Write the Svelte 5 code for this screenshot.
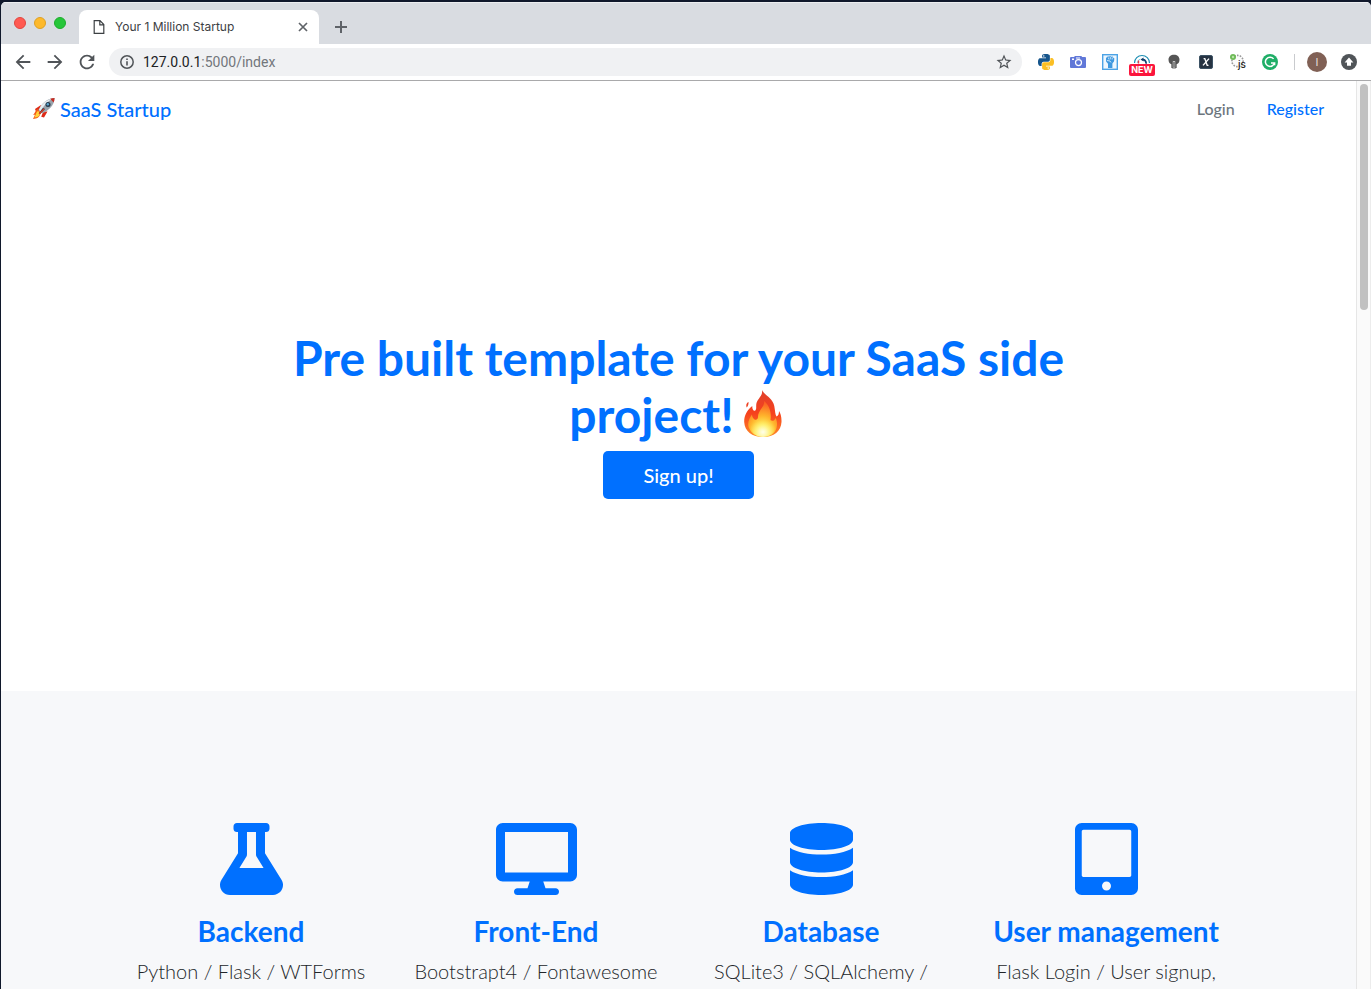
<script>
  const features = [
    {
      title: 'Backend',
      text: 'Python / Flask / WTForms',
      width: 448,
      path: 'M437.2 403.5L320 215V64h8c13.3 0 24-10.7 24-24V24c0-13.3-10.7-24-24-24H120c-13.3 0-24 10.7-24 24v16c0 13.3 10.7 24 24 24h8v151L10.8 403.5C-18.5 450.6 15.3 512 70.9 512h306.2c55.7 0 89.4-61.5 60.1-108.5zM137.9 320l48.2-77.6c3.7-5.2 5.8-11.6 5.8-18.4V64h64v160c0 6.9 2.2 13.2 5.8 18.4l48.2 77.6h-172z'
    },
    {
      title: 'Front-End',
      text: 'Bootstrapt4 / Fontawesome',
      width: 576,
      path: 'M528 0H48C21.5 0 0 21.5 0 48v320c0 26.5 21.5 48 48 48h192l-16 48h-72c-13.3 0-24 10.7-24 24s10.7 24 24 24h272c13.3 0 24-10.7 24-24s-10.7-24-24-24h-72l-16-48h192c26.5 0 48-21.5 48-48V48c0-26.5-21.5-48-48-48zm-16 352H64V64h448v288z'
    },
    {
      title: 'Database',
      text: 'SQLite3 / SQLAlchemy /',
      width: 448,
      path: 'M448 73.143v45.714C448 159.143 347.667 192 224 192S0 159.143 0 118.857V73.143C0 32.857 100.333 0 224 0s224 32.857 224 73.143zM448 176v102.857C448 319.143 347.667 352 224 352S0 319.143 0 278.857V176c48.125 33.143 136.208 48.572 224 48.572S399.874 209.143 448 176zm0 160v102.857C448 479.143 347.667 512 224 512S0 479.143 0 438.857V336c48.125 33.143 136.208 48.572 224 48.572S399.874 369.143 448 336z'
    },
    {
      title: 'User management',
      text: 'Flask Login / User signup,',
      width: 448,
      path: 'M400 0H48C21.5 0 0 21.5 0 48v416c0 26.5 21.5 48 48 48h352c26.5 0 48-21.5 48-48V48c0-26.5-21.5-48-48-48zM224 480c-17.7 0-32-14.3-32-32s14.3-32 32-32 32 14.3 32 32-14.3 32-32 32zm176-108c0 6.6-5.4 12-12 12H60c-6.6 0-12-5.4-12-12V60c0-6.6 5.4-12 12-12h328c6.6 0 12 5.4 12 12v312z'
    }
  ];

  const snake =
    'M14.25.18l.9.2.73.26.59.3.45.32.34.34.25.34.16.33.1.3.04.26.02.2-.01.13V8.5l-.05.63-.13.55-.21.46-.26.38-.3.31-.33.25-.35.19-.35.14-.33.1-.3.07-.26.04-.21.02H8.77l-.69.05-.59.14-.5.22-.41.27-.33.32-.27.35-.2.36-.15.37-.1.35-.07.32-.04.27-.02.21v3.06H3.17l-.21-.03-.28-.07-.32-.12-.35-.18-.36-.26-.36-.36-.35-.46-.32-.59-.28-.73-.21-.88-.14-1.05-.05-1.23.06-1.22.16-1.04.24-.87.32-.71.36-.57.4-.44.42-.33.42-.24.4-.16.36-.1.32-.05.24-.01h.16l.06.01h8.16v-.83H6.18l-.01-2.75-.02-.37.05-.34.11-.31.17-.28.25-.26.31-.23.38-.2.44-.18.51-.15.58-.12.64-.1.71-.06.77-.04.84-.02 1.27.05zm-6.3 1.98l-.23.33-.08.41.08.41.23.34.33.22.41.09.41-.09.33-.22.23-.34.08-.41-.08-.41-.23-.33-.33-.22-.41-.09-.41.09z';
</script>

<div class="desktop">
  <div class="window">
    <div class="tabs">
      <div class="lights">
        <button class="light red" aria-label="Close window"></button>
        <button class="light amber" aria-label="Minimise window"></button>
        <button class="light green" aria-label="Zoom window"></button>
      </div>
      <div class="tab">
        <svg width="12" height="16" viewBox="0 0 12 16" fill="none" stroke="#3c4043" stroke-width="1.2"><path d="M1.2 1.7h5.8l3.8 3.8v8.8H1.2zM6.8 1.8v4h4" /></svg>
        <span class="tab-title">Your 1 Million Startup</span>
        <button class="bare tab-close" aria-label="Close tab">
          <svg width="10" height="10" viewBox="0 0 10 10" stroke="#5f6368" stroke-width="1.7"><path d="M1 1l8 8M9 1l-8 8" /></svg>
        </button>
      </div>
      <button class="bare new-tab" aria-label="New tab">
        <svg width="12" height="12" viewBox="0 0 12 12" stroke="#5f6368" stroke-width="2"><path d="M6 0v12M0 6h12" /></svg>
      </button>
    </div>

    <div class="toolbar">
      <button class="bare tool" aria-label="Back"><svg width="22" height="22" viewBox="0 0 24 24" fill="#505458"><path d="M20 10.900H7.830l5.590-5.490L12 4l-8 8 8 8 1.410-1.410L7.830 13.100H20z" /></svg></button>
      <button class="bare tool" aria-label="Forward"><svg width="22" height="22" viewBox="0 0 24 24" fill="#505458"><path d="M4 10.900h12.170l-5.590-5.490L12 4l8 8-8 8-1.410-1.410 5.580-5.490H4z" /></svg></button>
      <button class="bare tool" aria-label="Reload"><svg width="22" height="22" viewBox="0 0 24 24" fill="#505458"><path d="M17.650 6.350C16.200 4.900 14.210 4 12 4c-4.420 0-7.990 3.580-7.990 8s3.570 8 7.990 8c3.730 0 6.840-2.550 7.730-6h-2.080c-.82 2.330-3.040 4-5.650 4-3.310 0-6-2.690-6-6s2.690-6 6-6c1.660 0 3.140.69 4.220 1.780L13 11h7V4l-2.350 2.350z" /></svg></button>
      <div class="address">
        <svg width="16" height="16" viewBox="0 0 16 16"><circle cx="8" cy="8" r="6.200" fill="none" stroke="#505458" stroke-width="1.500" /><path d="M7.200 4.400h1.600V6H7.200zM7.200 7.200h1.600v4.400H7.200z" fill="#505458" /></svg>
        <span class="url">127.0.0.1<span class="url-path">:5000/index</span></span>
        <button class="bare" aria-label="Bookmark this page"><svg width="18" height="18" viewBox="0 0 24 24" fill="#505458"><path d="M22 9.240l-7.190-.62L12 2 9.190 8.630 2 9.240l5.460 4.730L5.820 21 12 17.270 18.180 21l-1.630-7.030L22 9.240zM12 15.400l-3.760 2.270 1-4.280-3.320-2.880 4.380-.38L12 6.100l1.710 4.040 4.380.38-3.320 2.880 1 4.280L12 15.400z" /></svg></button>
      </div>

      <div class="extensions">
        <button class="bare tool" aria-label="Python">
          <svg width="16" height="16" viewBox="0 0 24 24"><path fill="#16558c" d={snake} /><path fill="#fbbf24" transform="rotate(180 12 12)" d={snake} /></svg>
        </button>
        <button class="bare tool" aria-label="Screenshot">
          <svg width="16" height="16" viewBox="0 0 16 16"><path fill="#6178d8" d="M0 4q0-1 1-1h3l1-1h6q1 0 1 1h3q1 0 1 1v9q0 1-1 1H1q-1 0-1-1z" /><circle cx="8.500" cy="8.600" r="3" fill="none" stroke="#fff" stroke-width="1.200" /><path fill="#fff" d="M2 4.500h2V6H2zM6 3.500h4v1H6z" /></svg>
        </button>
        <button class="bare tool" aria-label="Fist">
          <svg width="16" height="16" viewBox="0 0 16 16"><rect x=".7" y=".7" width="14.600" height="14.600" fill="#eef7fe" stroke="#4ca3e6" stroke-width="1.400" /><path fill="#3f98df" d="M4 4l2-1.700 1 .5 1-.8 1.300.7 1.400-.2.8 1.400.8.3-.2 3-1.700 2.200V14H6V9.800L4.100 7.500z" /><path stroke="#e5f4ff" stroke-width=".8" d="M6.300 3.500l.7 2M8.300 3v2.400M10.300 3.500l-.2 2M5 6.500l3 .5 1 1.500" fill="none" /></svg>
        </button>
        <button class="bare tool badge-host" aria-label="Speed, new">
          <svg width="18" height="18" viewBox="0 0 18 18" fill="none"><path d="M1.500 10a7.500 7.500 0 0 1 15 0" stroke="#1f8fb4" stroke-width="1.200" /><path d="M4.200 10a5 5 0 0 1 3-4" stroke="#7ccde0" stroke-width="1" /><path d="M7.500 6.500l3-2v1.200q3.500.8 3.500 5h-1.500q-.5-3-2-3.200v1z" fill="#123f6c" /><path d="M5.500 7.500v3" stroke="#e6384b" stroke-width="1.400" /></svg>
          <span class="badge">NEW</span>
        </button>
        <button class="bare tool" aria-label="Lights">
          <svg width="14" height="16" viewBox="0 0 14 16"><path fill="#555" d="M7 .8c3.200 0 5.500 2 5.500 4.900 0 2.600-1.500 4.300-3 4.600V14h-5v-3.700c-1.500-.3-3-2-3-4.600C1.500 2.800 3.800.8 7 .8z" /><path d="M5.200 14V7.500Q7 4.800 8.800 7.500V14z" fill="#c9c9c9" stroke="#444" stroke-width=".8" /><path stroke="#444" d="M7 8v5" /></svg>
        </button>
        <button class="bare tool" aria-label="XPath">
          <svg width="14" height="14" viewBox="0 0 14 14"><rect x=".5" y=".5" width="13" height="13" rx="1.500" fill="#263342" stroke="#3d5365" /><path d="M4.600 3.600h1.200l2.400 6.800h1.300M10 3.600L4 10.400" fill="none" stroke="#fff" stroke-width="1.400" /></svg>
        </button>
        <button class="bare tool" aria-label="JavaScript switch">
          <svg width="18" height="18" viewBox="0 0 18 18"><circle cx="8.500" cy="8" r="5.600" fill="#fbfbfb" stroke="#9a9a9a" stroke-width="1.600" stroke-dasharray="1.600 1.200" /><circle cx="4" cy="4" r="3" fill="#6dba57" /><circle cx="4" cy="4" r="1.200" fill="#b9e2a9" /><text x="9" y="15" font-family="Inter, sans-serif" font-size="10" font-weight="500" fill="#252525">js</text></svg>
        </button>
        <button class="bare tool" aria-label="Grammar">
          <svg width="16" height="16" viewBox="0 0 16 16"><circle cx="8" cy="8" r="8" fill="#1fae67" /><path d="M11.600 4.900a4.600 4.600 0 1 0 .9 4H9M12.600 8.300v3" fill="none" stroke="#fff" stroke-width="1.500" /></svg>
        </button>
      </div>
      <span class="divider"></span>
      <button class="bare tool" aria-label="Profile"><span class="avatar">I</span></button>
      <button class="bare tool" aria-label="Update"><svg width="16" height="16" viewBox="0 0 16 16"><circle cx="8" cy="8" r="8" fill="#505458" /><path d="M8 3.500L12.400 8.400H10V11.800H6V8.400H3.600z" fill="#fff" /></svg></button>
    </div>

    <div class="viewport">
      <div class="page">
        <nav class="navbar">
          <a class="brand" href="#home">
            <svg width="24" height="24" viewBox="0 0 24 24">
              <path d="M9 8L3 12l1 2.500 4-1.500zM15.500 14.500l-3.500 6-2.800-.8 2-5z" fill="#df2b16" />
              <path d="M6 12c-3 1-2.500 4-5 6l2-.2L1 22c4-.3 6-1.300 8-6z" fill="#f45b16" />
              <path d="M6 14c-2 1-2 4-3.700 6.500C6 20.500 7.500 19 8.500 16z" fill="#ffd33b" />
              <path d="M22.500 1C16 1 9.500 6 6.500 13l3.500 3.500C17 13.500 22.500 8 22.500 1z" fill="#98a3ac" />
              <path d="M20 1.700C14 3 9.500 7 7 12.700l1.500 1.500C11 9 15 5.500 20 1.700z" fill="#e8edf0" />
              <path d="M18.200 1.700c1.700-.6 3-.8 4.400-.8-.1 1.600-.4 3-1 4.500z" fill="#c62b20" />
              <circle cx="16" cy="7.500" r="2.500" fill="#26394a" />
              <circle cx="15.800" cy="7.300" r="1.200" fill="#5aa5cf" />
              <path d="M13 12l-5 5-1-1 4-5z" fill="#293139" />
              <path d="M12 12l-5 5" stroke="#e03a23" stroke-width="1.200" />
            </svg>
            <span>SaaS Startup</span>
          </a>
          <div class="links">
            <a class="login" href="#login">Login</a>
            <a class="register" href="#register">Register</a>
          </div>
        </nav>

        <header class="hero">
          <h1>
            Pre built template for your SaaS side project!<svg class="fire" viewBox="-5 0 54 48" role="img" aria-label="fire">
              <defs>
                <linearGradient id="flame" x1="0" y1="0" x2="0" y2="1">
                  <stop offset="0" stop-color="#e0402c" /><stop offset=".5" stop-color="#f6421d" /><stop offset="1" stop-color="#ff8a28" />
                </linearGradient>
                <radialGradient id="core" cx=".5" cy=".88" r=".85">
                  <stop offset="0" stop-color="#fffee0" /><stop offset=".25" stop-color="#ffef60" /><stop offset=".55" stop-color="#ffb52c" /><stop offset="1" stop-color="#fb5a22" />
                </radialGradient>
                <radialGradient id="glow" cx=".5" cy=".75" r=".6">
                  <stop offset="0" stop-color="#ffffe8" /><stop offset="1" stop-color="#ffee58" stop-opacity="0" />
                </radialGradient>
              </defs>
              <path fill="url(#flame)" d="M23 0c1 6-4 8-5.500 13-.8 3 .4 6-1.200 7.500-1.800 1-3.300-1.500-3-4.500C8 20 5 26 5.200 32 5.600 41 13 47 24 47s18-6 18.500-15c.2-5-1-9-2.500-11 0 3-.8 5-2.500 5.500C35 22 37 15 32 9.500 29 6 25 4 23 0zM9.500 12c-2 1-2.800 3-1.800 5.500 1.500-1.500 2-3.500 1.800-5.500z" />
              <path fill="url(#core)" d="M25 11c1 6-6 9-6 16 0 2-2 4-4 2-1.500-1.500-2-3-2-4.500-3 4-5 9-3 13.500C12.500 44 18 47 24 47s12-3 13.500-9c1-4 .5-8-1-10-1 3-3.500 3.500-5 2 1-7-.5-14-6.500-19z" />
              <ellipse cx="24" cy="37" rx="12" ry="10" fill="url(#glow)" />
            </svg>
          </h1>
          <a class="signup" href="#signup">Sign up!</a>
        </header>

        <section class="features">
          <div class="grid">
            {#each features as f}
              <article>
                <svg height="72" viewBox="0 0 {f.width} 512" fill="#0070ff"><path d={f.path} /></svg>
                <h3>{f.title}</h3>
                <p>{f.text}</p>
              </article>
            {/each}
          </div>
        </section>
      </div>
      <div class="scrollbar"><div class="thumb"></div></div>
    </div>
  </div>
</div>

<style>
  :global(body) {
    margin: 0;
  }
  .desktop,
  .desktop * {
    box-sizing: border-box;
  }
  .desktop {
    height: 100vh;
    padding: 2px 0 0 1px;
    background: #10182b;
    overflow: hidden;
  }
  .window {
    height: 100%;
    display: flex;
    flex-direction: column;
    background: #fff;
    border-radius: 5px 5px 0 0;
    overflow: hidden;
    font-family: Inter, sans-serif;
  }
  .bare {
    border: 0;
    padding: 0;
    background: none;
    display: flex;
    align-items: center;
    justify-content: center;
  }
  svg {
    display: block;
    flex: none;
  }

  .tabs {
    height: 42px;
    flex: none;
    display: flex;
    background: #d9dce1;
    border-top: 1px solid #eceef0;
  }
  .lights {
    display: flex;
    gap: 8px;
    padding: 14px 13px 0;
  }
  .light {
    width: 12px;
    height: 12px;
    padding: 0;
    border: 1px solid;
    border-radius: 50%;
  }
  .red {
    background: #ff5a52;
    border-color: #e2463f;
  }
  .amber {
    background: #fdb92c;
    border-color: #dfa023;
  }
  .green {
    background: #26c63a;
    border-color: #1dad2b;
  }
  .tab {
    width: 240px;
    margin-top: 7px;
    padding: 0 11px 0 14px;
    display: flex;
    align-items: center;
    background: #fff;
    border-radius: 8px 8px 0 0;
  }
  .tab-title {
    flex: 1;
    margin-left: 10px;
    font-size: 12px;
    line-height: 16px;
    color: #3c4043;
  }
  .new-tab {
    margin: 7px 0 0 16px;
  }

  .toolbar {
    height: 37px;
    flex: none;
    display: flex;
    align-items: center;
    padding: 0 6px;
    border-bottom: 1px solid #a9a9ab;
  }
  .tool {
    width: 32px;
    height: 28px;
    flex: none;
  }
  .address {
    flex: 1;
    height: 28px;
    margin: 0 8px 0 6px;
    padding: 0 9px 0 10px;
    display: flex;
    align-items: center;
    background: #f0f1f3;
    border-radius: 14px;
  }
  .url {
    flex: 1;
    margin-left: 8px;
    font-family: Roboto, sans-serif;
    font-size: 14px;
    line-height: 20px;
    color: #202124;
  }
  .url-path {
    color: #72767b;
  }
  .extensions {
    display: flex;
  }
  .badge-host {
    position: relative;
  }
  .badge {
    position: absolute;
    left: 3px;
    bottom: 0;
    width: 26px;
    height: 12px;
    border-radius: 2px;
    background: #fb153c;
    color: #fff;
    font: 700 9px/12px Inter, sans-serif;
    text-align: center;
  }
  .divider {
    width: 1px;
    height: 16px;
    margin: 0 6px 0 8px;
    background: #c9cbce;
  }
  .avatar {
    width: 20px;
    height: 20px;
    border-radius: 50%;
    background: #806055;
    color: #e6dcd8;
    font: 400 11px/20px Inter, sans-serif;
  }

  .viewport {
    flex: 1;
    min-height: 0;
    display: flex;
  }
  .page {
    flex: 1;
    min-width: 0;
    overflow: hidden;
    font-family: Lato, sans-serif;
    color: #212529;
  }
  .page a {
    color: #0070ff;
    text-decoration: none;
  }
  .navbar {
    display: flex;
    justify-content: space-between;
    align-items: center;
    height: 56px;
    padding: 0 32px 0 31px;
  }
  .brand {
    display: flex;
    align-items: center;
    gap: 4px;
    font-size: 20px;
    line-height: 30px;
    font-weight: 500;
  }
  .links {
    display: flex;
    gap: 32px;
    font-size: 16px;
    line-height: 24px;
    font-weight: 500;
  }
  .page .login {
    color: #6c757d;
  }
  .hero {
    padding: 192px 16px;
    text-align: center;
  }
  h1 {
    max-width: 825px;
    margin: 0 auto 8px;
    font-size: 48px;
    line-height: 57px;
    font-weight: 700;
    color: #0070ff;
  }
  .fire {
    display: inline-block;
    width: 54px;
    height: 48px;
    vertical-align: -5px;
  }
  .page .signup {
    display: block;
    width: fit-content;
    margin: 0 auto;
    padding: 9px 40px;
    border-radius: 5px;
    background: #0070ff;
    color: #fff;
    font-size: 20px;
    line-height: 30px;
    font-weight: 500;
  }
  .features {
    min-height: 100%;
    padding-top: 132px;
    background: #f7f8fa;
  }
  .grid {
    max-width: 1140px;
    margin: 0 auto;
    display: grid;
    grid-template-columns: repeat(4, 1fr);
  }
  article {
    display: flex;
    flex-direction: column;
    align-items: center;
    text-align: center;
  }
  h3 {
    margin: 19px 0 8px;
    font-size: 28px;
    line-height: 34px;
    font-weight: 700;
    color: #0070ff;
  }
  p {
    margin: 0;
    font-size: 20px;
    line-height: 30px;
    font-weight: 300;
  }
  .scrollbar {
    width: 15px;
    flex: none;
    padding: 3px 3px 0;
    background: #fafafa;
    border-left: 1px solid #e6e6e6;
    border-right: 1px solid #ececec;
  }
  .thumb {
    width: 8px;
    height: 25%;
    border-radius: 4px;
    background: #c1c1c1;
  }
</style>
